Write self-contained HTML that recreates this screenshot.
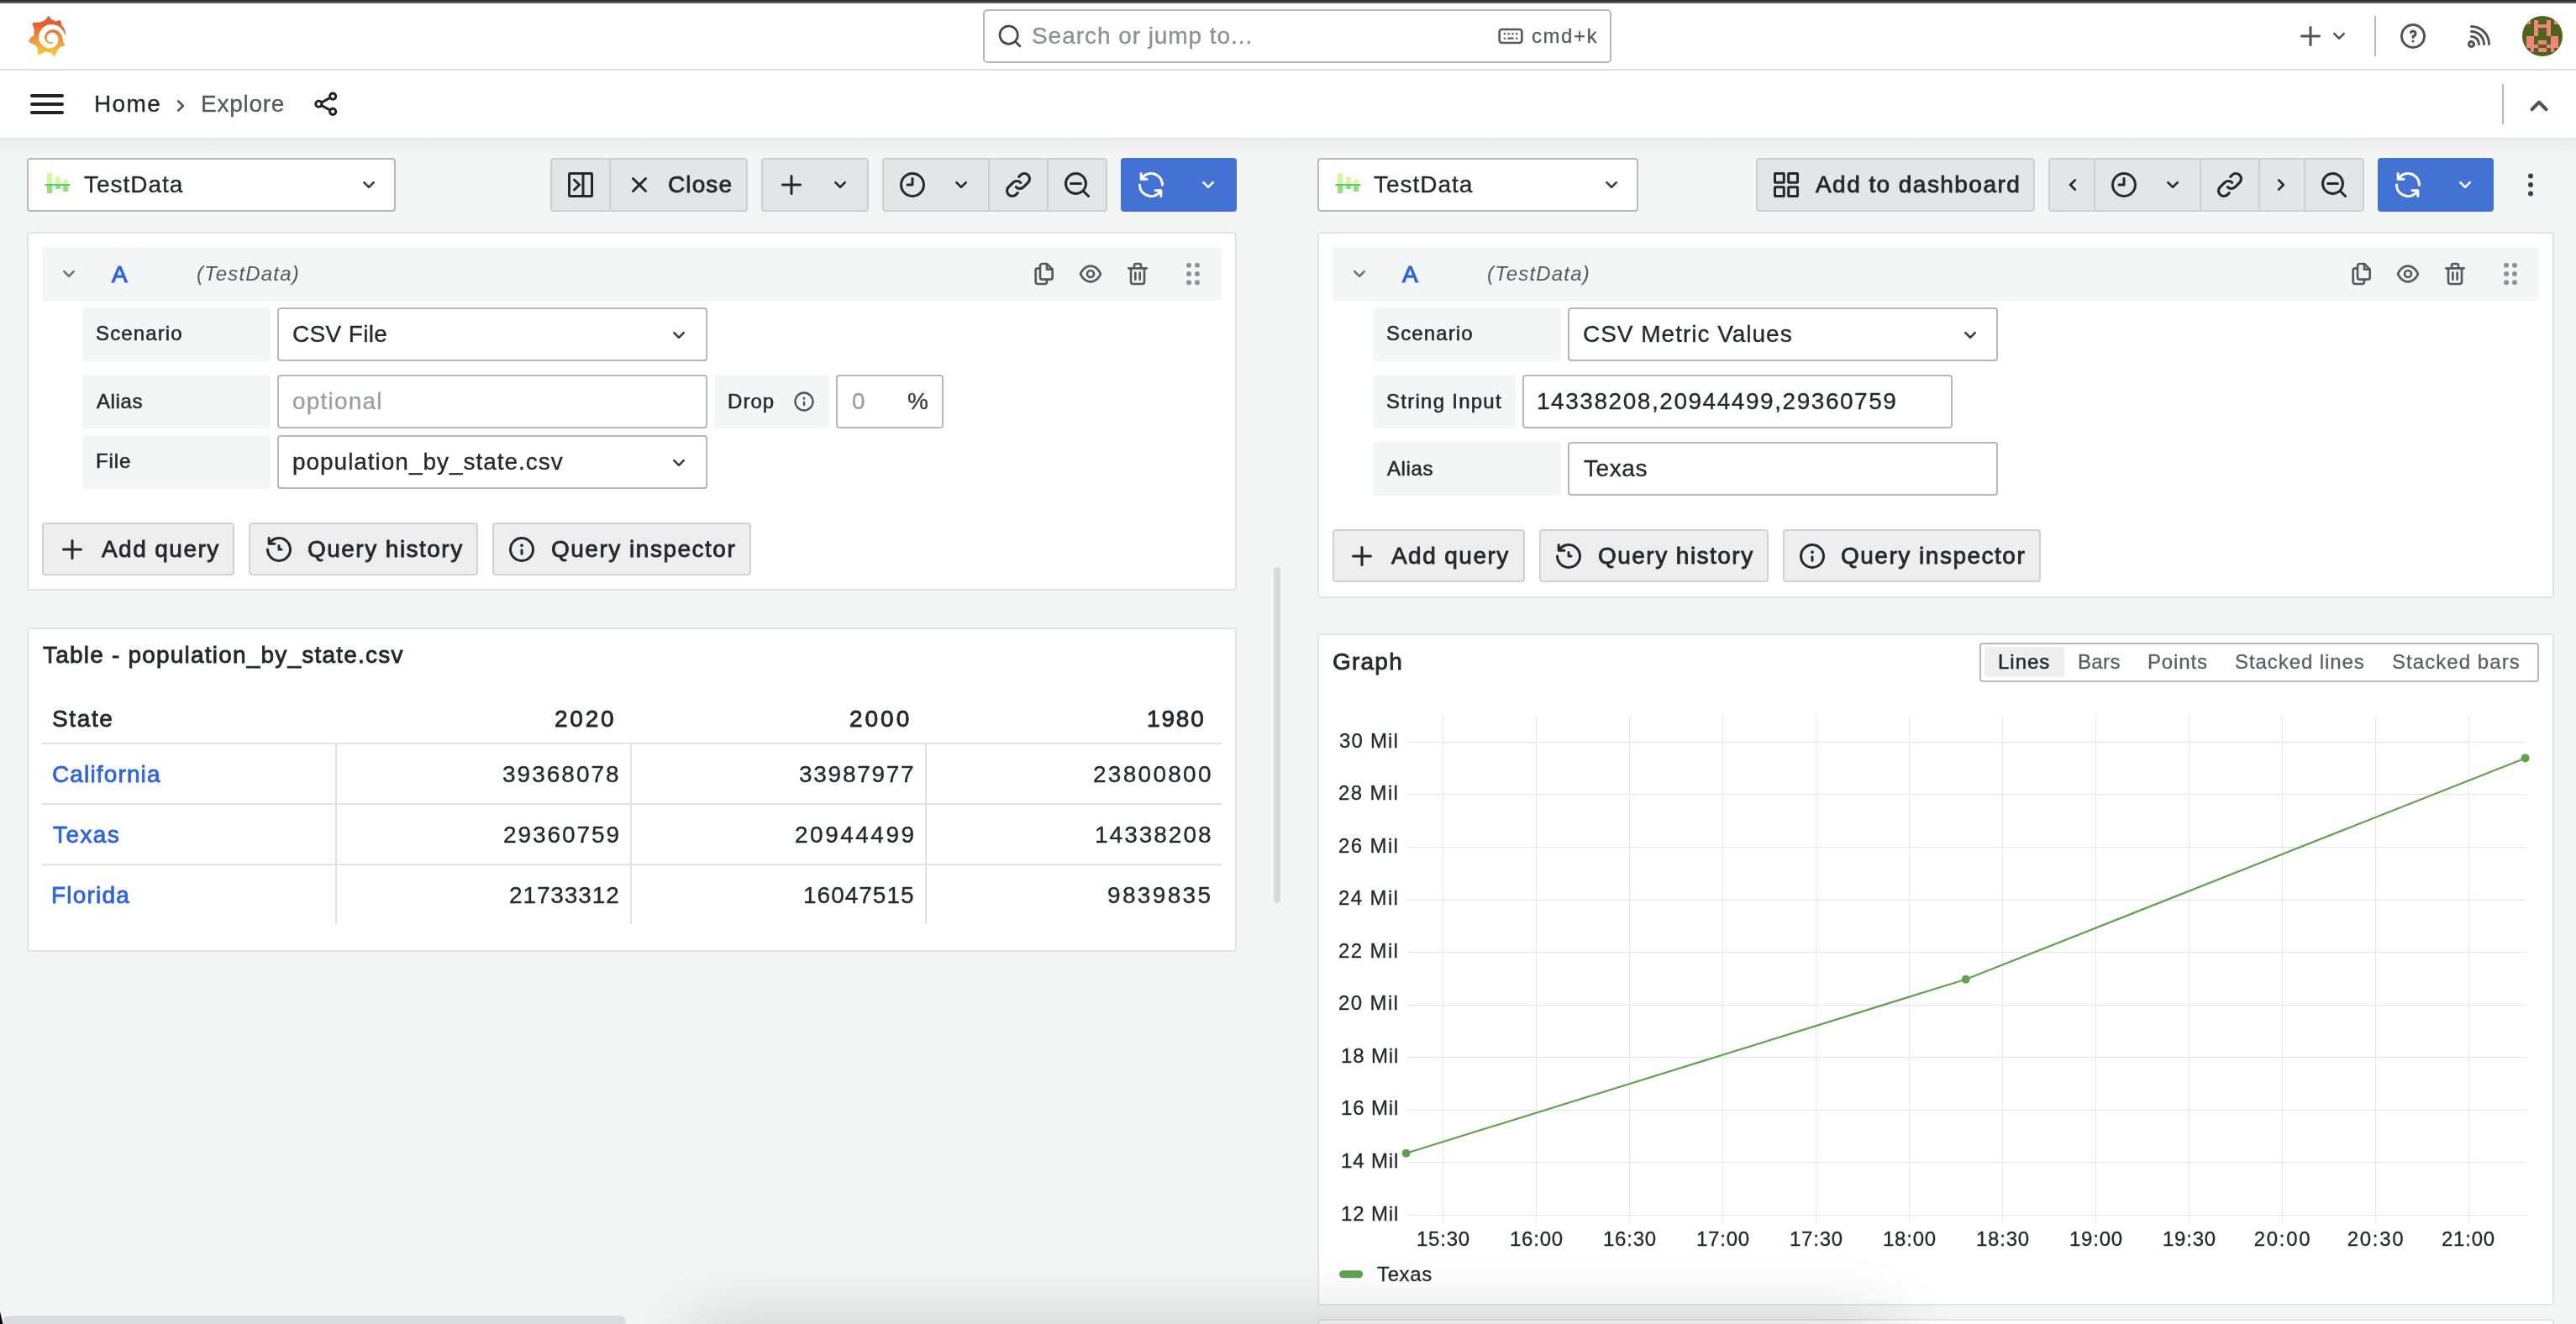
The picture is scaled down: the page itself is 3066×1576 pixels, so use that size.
<!DOCTYPE html>
<html lang="en"><head><meta charset="utf-8"><title>Explore - Grafana</title>
<style>
html,body{margin:0;padding:0}
body{width:3066px;height:1576px;overflow:hidden;position:relative;background:#f4f5f5;font-family:"Liberation Sans", sans-serif;}
.b{position:absolute;box-sizing:border-box}
.t{position:absolute;white-space:nowrap;line-height:1;font-family:"Liberation Sans", sans-serif;will-change:transform}
.i{position:absolute;overflow:visible;fill:currentColor}
.i .s{fill:none;stroke:currentColor;stroke-width:var(--sw);stroke-linecap:round;stroke-linejoin:round}
</style></head><body>
<div class="b" style="left:0px;top:0px;width:3066px;height:164px;background:#ffffff;"></div>
<div class="b" style="left:0;top:164px;width:3066px;height:22px;background:linear-gradient(#eaebeb,#f4f5f5)"></div>
<div class="b" style="left:0;top:164px;width:3066px;height:1px;background:#e2e3e3"></div>
<div class="b" style="left:0px;top:82px;width:3066px;height:2px;background:#e3e4e6;"></div>
<div class="b" style="left:0px;top:0px;width:3066px;height:2px;background:#333438;"></div>
<div class="b" style="left:0px;top:2px;width:3066px;height:1px;background:#5f6065;"></div>
<div class="b" style="left:0px;top:3px;width:3066px;height:1px;background:#525358;"></div>
<svg class="i" style="left:24px;top:10px" width="66" height="66" viewBox="0 0 1324 1324"><defs><linearGradient id="lg" gradientUnits="userSpaceOnUse" x1="0" y1="1140" x2="0" y2="180"><stop offset="0" stop-color="#f7cf3c"/><stop offset=".5" stop-color="#ea8a3b"/><stop offset=".8" stop-color="#e05d37"/><stop offset="1" stop-color="#e05a37"/></linearGradient></defs><path fill="url(#lg)" d="M680,180C668,180 653,210 640,225C627,240 613,258 600,270C587,282 577,292 560,300C543,308 520,314 500,320C480,326 468,332 440,335C412,338 353,333 330,335C307,337 307,336 302,345C297,354 295,371 298,390C301,409 314,438 320,460C326,482 333,497 335,520C337,543 332,578 330,600C328,622 332,635 320,650C308,665 279,670 260,690C241,710 210,750 205,770C200,790 214,797 230,810C246,823 277,837 300,850C323,863 353,877 370,890C387,903 391,915 400,930C409,945 422,963 425,980C428,997 420,1010 420,1030C420,1050 415,1089 428,1100C441,1111 478,1102 500,1095C522,1088 543,1069 560,1060C577,1051 580,1042 600,1040C620,1038 657,1045 680,1050C703,1055 723,1058 740,1070C757,1082 767,1108 780,1120C793,1132 808,1144 820,1142C832,1140 842,1125 850,1110C858,1095 863,1067 870,1050C877,1033 880,1025 890,1010C900,995 917,975 930,960C943,945 953,930 970,920C987,910 1014,907 1030,900C1046,893 1063,890 1067,880C1071,870 1061,853 1055,840C1049,827 1036,812 1030,800C1024,788 1022,783 1020,770C1018,757 1020,742 1015,720C1010,698 1002,665 990,640C978,615 962,590 940,570C918,550 888,530 860,520C832,510 800,506 770,508C740,510 705,521 680,535C655,549 635,569 620,590C605,611 595,635 590,660C585,685 583,717 590,740C597,763 612,783 630,800C648,817 677,834 700,840C723,846 753,840 770,835C787,830 804,817 802,812C800,807 777,807 760,805C743,803 718,808 700,800C682,792 665,777 655,760C645,743 639,722 640,700C641,678 647,649 660,630C673,611 697,593 720,585C743,577 775,573 800,580C825,587 852,605 870,625C888,645 904,672 910,700C916,728 913,760 905,790C897,820 879,856 860,880C841,904 817,922 790,935C763,948 732,956 700,955C668,954 630,944 600,930C570,916 542,893 520,870C498,847 478,820 465,790C452,760 446,723 445,690C444,657 449,622 460,590C471,558 488,528 510,500C532,472 560,444 590,425C620,406 657,394 690,388C723,382 758,384 790,388C822,392 852,398 880,410C908,422 937,440 960,460C983,480 1003,505 1020,530C1037,555 1050,591 1060,610C1070,629 1074,644 1078,642C1082,640 1087,620 1086,600C1085,580 1078,545 1070,520C1062,495 1049,472 1035,450C1021,428 994,410 985,390C976,370 983,346 980,330C977,314 972,302 965,295C958,288 952,285 940,285C928,285 905,291 890,295C875,299 865,312 850,310C835,308 817,292 800,285C783,278 764,276 750,265C736,254 727,236 715,222C703,208 692,180 680,180Z"/></svg>
<div class="b" style="left:1170px;top:11px;width:748px;height:64px;background:#ffffff;border:2px solid #b6b8bb;border-radius:5px;"></div>
<svg class="i" style="left:1186.00px;top:26.80px;color:#3f444a;--sw:2" width="32" height="32" viewBox="0 0 24 24"><path d="M21.71,20.29,18,16.61A9,9,0,1,0,16.61,18l3.68,3.68a1,1,0,0,0,1.42,0A1,1,0,0,0,21.71,20.29ZM11,18a7,7,0,1,1,7-7A7,7,0,0,1,11,18Z"/></svg>
<span id="t1" class="t" style="top:29.40px;font-size:28px;color:#8e9195;left:1228.47px;letter-spacing:0.947px;-webkit-text-stroke:0.35px #8e9195;">Search or jump to...</span>
<svg class="i" style="left:1782.00px;top:27.00px;color:#555960;--sw:2.0" width="32" height="32" viewBox="0 0 24 24"><g class="s"><rect x="2" y="6" width="20" height="12" rx="2.200"/></g><g><circle cx="6.600" cy="10" r=".950"/><circle cx="10.200" cy="10" r=".950"/><circle cx="13.800" cy="10" r=".950"/><circle cx="17.400" cy="10" r=".950"/><circle cx="6.600" cy="14" r=".950"/><circle cx="17.400" cy="14" r=".950"/><rect x="9.200" y="13.100" width="5.600" height="1.800" rx=".900"/></g></svg>
<span id="t2" class="t" style="top:30.58px;font-size:24px;color:#555960;left:1822.85px;letter-spacing:1.561px;-webkit-text-stroke:0.3px #555960;">cmd+k</span>
<svg class="i" style="left:2732.00px;top:25.00px;color:#50545a;--sw:2" width="36" height="36" viewBox="0 0 24 24"><path d="M19,11H13V5a1,1,0,0,0-2,0v6H5a1,1,0,0,0,0,2h6v6a1,1,0,0,0,2,0V13h6a1,1,0,0,0,0-2Z"/></svg>
<svg class="i" style="left:2768.00px;top:27.00px;color:#50545a;--sw:2" width="32" height="32" viewBox="0 0 24 24"><path d="M17,9.17a1,1,0,0,0-1.41,0L12,12.71,8.46,9.17a1,1,0,0,0-1.41,0,1,1,0,0,0,0,1.42l4.24,4.24a1,1,0,0,0,1.42,0L17,10.59A1,1,0,0,0,17,9.17Z"/></svg>
<div class="b" style="left:2826px;top:19px;width:2px;height:48px;background:#bbbdc0;"></div>
<svg class="i" style="left:2854.00px;top:25.00px;color:#50545a;--sw:2" width="36" height="36" viewBox="0 0 24 24"><path d="M11.29,15.29a1.58,1.58,0,0,0-.12.15.76.76,0,0,0-.09.18.64.64,0,0,0-.06.18,1.36,1.36,0,0,0,0,.2.84.84,0,0,0,.08.38.9.9,0,0,0,.54.54.94.94,0,0,0,.76,0,.9.9,0,0,0,.54-.54A1,1,0,0,0,13,16a1,1,0,0,0-.29-.71A1,1,0,0,0,11.29,15.29ZM12,2A10,10,0,1,0,22,12,10,10,0,0,0,12,2Zm0,18a8,8,0,1,1,8-8A8,8,0,0,1,12,20ZM12,7A3,3,0,0,0,9.4,8.5a1,1,0,1,0,1.73,1A1,1,0,0,1,12,9a1,1,0,0,1,0,2,1,1,0,0,0-1,1v1a1,1,0,0,0,2,0v-.18A3,3,0,0,0,12,7Z"/></svg>
<svg class="i" style="left:2933.60px;top:24.40px;color:#50545a;--sw:2" width="36" height="36" viewBox="0 0 24 24"><path d="M2.88,16.88a3,3,0,0,0,0,4.24,3,3,0,0,0,4.24,0,3,3,0,0,0-4.24-4.24Zm2.83,2.830a1,1,0,0,1-1.42-1.42,1,1,0,0,1,1.42,0A1,1,0,0,1,5.71,19.71ZM5,12a1,1,0,0,0,0,2,5,5,0,0,1,5,5,1,1,0,0,0,2,0,7,7,0,0,0-7-7ZM5,8a1,1,0,0,0,0,2,9,9,0,0,1,9,9,1,1,0,0,0,2,0A11,11,0,0,0,5,8ZM5,4A1,1,0,0,0,5,6,13,13,0,0,1,18,19a1,1,0,0,0,2,0A15,15,0,0,0,5,4Z"/></svg>
<svg class="i" style="left:3002px;top:18.800px" width="48" height="48" viewBox="0 0 10 10"><defs><clipPath id="ac"><circle cx="5" cy="5" r="5"/></clipPath></defs><g clip-path="url(#ac)" shape-rendering="crispEdges"><rect width="10" height="10" fill="#4e641d"/><rect x="0.99" y="0.99" width="1.020" height="1.020" fill="#ee867b"/><rect x="2.99" y="0.99" width="1.020" height="1.020" fill="#ee867b"/><rect x="5.99" y="0.99" width="1.020" height="1.020" fill="#ee867b"/><rect x="7.99" y="0.99" width="1.020" height="1.020" fill="#ee867b"/><rect x="2.99" y="1.99" width="1.020" height="1.020" fill="#ee867b"/><rect x="3.99" y="1.99" width="1.020" height="1.020" fill="#ee867b"/><rect x="4.99" y="1.99" width="1.020" height="1.020" fill="#ee867b"/><rect x="5.99" y="1.99" width="1.020" height="1.020" fill="#ee867b"/><rect x="2.99" y="2.99" width="1.020" height="1.020" fill="#ee867b"/><rect x="5.99" y="2.99" width="1.020" height="1.020" fill="#ee867b"/><rect x="2.99" y="3.99" width="1.020" height="1.020" fill="#ee867b"/><rect x="5.99" y="3.99" width="1.020" height="1.020" fill="#ee867b"/><rect x="0.99" y="4.99" width="1.020" height="1.020" fill="#ee867b"/><rect x="1.99" y="4.99" width="1.020" height="1.020" fill="#ee867b"/><rect x="6.99" y="4.99" width="1.020" height="1.020" fill="#ee867b"/><rect x="7.99" y="4.99" width="1.020" height="1.020" fill="#ee867b"/><rect x="0.99" y="5.99" width="1.020" height="1.020" fill="#ee867b"/><rect x="1.99" y="5.99" width="1.020" height="1.020" fill="#ee867b"/><rect x="3.99" y="5.99" width="1.020" height="1.020" fill="#ee867b"/><rect x="4.99" y="5.99" width="1.020" height="1.020" fill="#ee867b"/><rect x="6.99" y="5.99" width="1.020" height="1.020" fill="#ee867b"/><rect x="7.99" y="5.99" width="1.020" height="1.020" fill="#ee867b"/><rect x="0.99" y="6.99" width="1.020" height="1.020" fill="#ee867b"/><rect x="1.99" y="6.99" width="1.020" height="1.020" fill="#ee867b"/><rect x="2.99" y="6.99" width="1.020" height="1.020" fill="#ee867b"/><rect x="5.99" y="6.99" width="1.020" height="1.020" fill="#ee867b"/><rect x="6.99" y="6.99" width="1.020" height="1.020" fill="#ee867b"/><rect x="7.99" y="6.99" width="1.020" height="1.020" fill="#ee867b"/><rect x="1.99" y="7.99" width="1.020" height="1.020" fill="#ee867b"/><rect x="3.99" y="7.99" width="1.020" height="1.020" fill="#ee867b"/><rect x="4.99" y="7.99" width="1.020" height="1.020" fill="#ee867b"/><rect x="6.99" y="7.99" width="1.020" height="1.020" fill="#ee867b"/></g></svg>
<svg class="i" style="left:32.00px;top:100.00px;color:#1f2328;--sw:2" width="48" height="48" viewBox="0 0 24 24"><path d="M3,8H21a1,1,0,0,0,0-2H3A1,1,0,0,0,3,8Zm18,8H3a1,1,0,0,0,0,2H21a1,1,0,0,0,0-2Zm0-5H3a1,1,0,0,0,0,2H21a1,1,0,0,0,0-2Z"/></svg>
<span id="t3" class="t" style="top:109.80px;font-size:28px;color:#24292e;left:111.77px;letter-spacing:1.344px;-webkit-text-stroke:0.35px #24292e;">Home</span>
<svg class="i" style="left:199.00px;top:110.40px;color:#50545a;--sw:2" width="32" height="32" viewBox="0 0 24 24"><path d="M14.83,11.29,10.59,7.05a1,1,0,0,0-1.42,0,1,1,0,0,0,0,1.41L12.71,12,9.17,15.54a1,1,0,0,0,0,1.41,1,1,0,0,0,.71.29,1,1,0,0,0,.71-.29l4.24-4.24A1,1,0,0,0,14.83,11.29Z"/></svg>
<span id="t4" class="t" style="top:109.80px;font-size:28px;color:#565a60;left:239.38px;letter-spacing:0.747px;-webkit-text-stroke:0.35px #565a60;">Explore</span>
<svg class="i" style="left:371.25px;top:107.25px;color:#1f2328;--sw:2.1" width="33.5" height="33.5" viewBox="0 0 24 24"><g class="s"><circle cx="18" cy="5.500" r="2.600"/><circle cx="6" cy="12" r="2.600"/><circle cx="18" cy="18.500" r="2.600"/><path d="M8.300 10.700l7.400-4M8.300 13.300l7.400 4"/></g></svg>
<div class="b" style="left:2978px;top:100px;width:2px;height:48px;background:#bbbdc0;"></div>
<svg class="i" style="left:2998.00px;top:102.00px;color:#50545a;--sw:2" width="48" height="48" viewBox="0 0 24 24"><path d="M17,13.41,12.71,9.17a1,1,0,0,0-1.42,0L7.05,13.41a1,1,0,0,0,0,1.42,1,1,0,0,0,1.41,0L12,11.29l3.54,3.54a1,1,0,0,0,.7.29,1,1,0,0,0,.71-.29A1,1,0,0,0,17,13.41Z"/></svg>
<div class="b" style="left:32.4px;top:188px;width:438.2px;height:63.5px;background:#ffffff;border:2px solid #b6b8bb;border-radius:4px;"></div>
<svg class="i" style="left:52.9px;top:204px" width="32" height="28" viewBox="0 0 32 28"><rect x="3" y="2" width="6.300" height="13.500" fill="#d6f5a6"/><rect x="3" y="15.500" width="6.300" height="10.500" fill="#8ce27c"/><rect x="12.800" y="6.500" width="6" height="9" fill="#d6f5a6"/><rect x="12.800" y="15.500" width="6" height="5.500" fill="#8ce27c"/><rect x="22" y="9.700" width="6.300" height="5.800" fill="#d6f5a6"/><rect x="22" y="15.500" width="6.300" height="8.500" fill="#8ce27c"/><rect x="0.500" y="15" width="30" height="2" fill="#63c76d"/></svg>
<span id="t5" class="t" style="top:206.10px;font-size:28px;color:#24292e;left:99.58px;letter-spacing:0.961px;-webkit-text-stroke:0.35px #24292e;">TestData</span>
<svg class="i" style="left:422.60px;top:204.30px;color:#3a3f45;--sw:2" width="32" height="32" viewBox="0 0 24 24"><path d="M17,9.17a1,1,0,0,0-1.41,0L12,12.71,8.46,9.17a1,1,0,0,0-1.41,0,1,1,0,0,0,0,1.42l4.24,4.24a1,1,0,0,0,1.42,0L17,10.59A1,1,0,0,0,17,9.17Z"/></svg>
<div class="b" style="left:655px;top:188px;width:235px;height:63.5px;background:#e4e5e7;border:2px solid #cdcfd2;border-radius:4px;"></div>
<div class="b" style="left:725px;top:190px;width:2px;height:59.5px;background:#cdcfd2;"></div>
<svg class="i" style="left:673.00px;top:202.00px;color:#24292e;--sw:2.0" width="36" height="36" viewBox="0 0 24 24"><g class="s" style="stroke-linejoin:miter"><rect x="3" y="3" width="18" height="18" rx=".500"/><path d="M14 3v18"/><path d="M7 8l4 4-4 4"/></g></svg>
<svg class="i" style="left:743.00px;top:202.00px;color:#24292e;--sw:2" width="36" height="36" viewBox="0 0 24 24"><path d="M13.41,12l4.3-4.29a1,1,0,1,0-1.42-1.42L12,10.59,7.71,6.29A1,1,0,0,0,6.29,7.71L10.59,12l-4.3,4.29a1,1,0,0,0,0,1.42,1,1,0,0,0,1.42,0L12,13.41l4.29,4.3a1,1,0,0,0,1.42,0,1,1,0,0,0,0-1.42Z"/></svg>
<span id="t6" class="t" style="top:206.00px;font-size:28px;color:#24292e;left:795.02px;letter-spacing:1.112px;-webkit-text-stroke:0.84px #24292e;">Close</span>
<div class="b" style="left:906px;top:188px;width:128px;height:63.5px;background:#e4e5e7;border:2px solid #cdcfd2;border-radius:4px;"></div>
<svg class="i" style="left:924.00px;top:202.00px;color:#24292e;--sw:2" width="36" height="36" viewBox="0 0 24 24"><path d="M19,11H13V5a1,1,0,0,0-2,0v6H5a1,1,0,0,0,0,2h6v6a1,1,0,0,0,2,0V13h6a1,1,0,0,0,0-2Z"/></svg>
<svg class="i" style="left:984.00px;top:204.00px;color:#24292e;--sw:2" width="32" height="32" viewBox="0 0 24 24"><path d="M17,9.17a1,1,0,0,0-1.41,0L12,12.71,8.46,9.17a1,1,0,0,0-1.41,0,1,1,0,0,0,0,1.42l4.24,4.24a1,1,0,0,0,1.42,0L17,10.59A1,1,0,0,0,17,9.17Z"/></svg>
<div class="b" style="left:1050px;top:188px;width:268px;height:63.5px;background:#e4e5e7;border:2px solid #cdcfd2;border-radius:4px;"></div>
<div class="b" style="left:1176.3px;top:190px;width:2px;height:59.5px;background:#cdcfd2;"></div>
<div class="b" style="left:1246px;top:190px;width:2px;height:59.5px;background:#cdcfd2;"></div>
<svg class="i" style="left:1067.80px;top:202.00px;color:#24292e;--sw:2" width="36" height="36" viewBox="0 0 24 24"><path d="M12,2A10,10,0,1,0,22,12,10.01114,10.01114,0,0,0,12,2Zm0,18a8,8,0,1,1,8-8A8.00917,8.00917,0,0,1,12,20ZM12,6a.99974.99974,0,0,0-1,1v4H8a1,1,0,0,0,0,2h4a.99974.99974,0,0,0,1-1V7A.99974.99974,0,0,0,12,6Z"/></svg>
<svg class="i" style="left:1127.80px;top:204.00px;color:#24292e;--sw:2" width="32" height="32" viewBox="0 0 24 24"><path d="M17,9.17a1,1,0,0,0-1.41,0L12,12.71,8.46,9.17a1,1,0,0,0-1.41,0,1,1,0,0,0,0,1.42l4.24,4.24a1,1,0,0,0,1.42,0L17,10.59A1,1,0,0,0,17,9.17Z"/></svg>
<svg class="i" style="left:1194.00px;top:202.00px;color:#24292e;--sw:2.1" width="36" height="36" viewBox="0 0 24 24"><g class="s"><path d="M10.2 13.8a4.2 4.2 0 0 0 5.94 0l3.6-3.6a4.2 4.2 0 0 0-5.94-5.94l-1.3 1.3"/><path d="M13.8 10.2a4.2 4.2 0 0 0-5.94 0l-3.6 3.6a4.2 4.2 0 0 0 5.94 5.94l1.3-1.3"/></g></svg>
<svg class="i" style="left:1263.90px;top:202.00px;color:#24292e;--sw:2" width="36" height="36" viewBox="0 0 24 24"><path d="M21.71,20.29,18,16.61A9,9,0,1,0,16.61,18l3.68,3.68a1,1,0,0,0,1.42,0A1,1,0,0,0,21.71,20.29ZM11,18a7,7,0,1,1,7-7A7,7,0,0,1,11,18Zm4-8H7a1,1,0,0,0,0,2h8a1,1,0,0,0,0-2Z"/></svg>
<div class="b" style="left:1334px;top:188px;width:138px;height:64px;background:#4472d4;border-radius:4px;"></div>
<svg class="i" style="left:1351.70px;top:202.00px;color:#ffffff;--sw:2.1" width="36" height="36" viewBox="0 0 24 24"><path d="M19.91,15.51H15.38a1,1,0,0,0,0,2h2.4A8,8,0,0,1,4,12a1,1,0,0,0-2,0,10,10,0,0,0,16.88,7.23V21a1,1,0,0,0,2,0V16.5A1,1,0,0,0,19.91,15.51ZM12,2A10,10,0,0,0,5.12,4.77V3a1,1,0,0,0-2,0V7.5a1,1,0,0,0,1,1h4.5a1,1,0,0,0,0-2H6.22A8,8,0,0,1,20,12a1,1,0,0,0,2,0A10,10,0,0,0,12,2Z"/></svg>
<svg class="i" style="left:1422.00px;top:204.00px;color:#ffffff;--sw:2" width="32" height="32" viewBox="0 0 24 24"><path d="M17,9.17a1,1,0,0,0-1.41,0L12,12.71,8.46,9.17a1,1,0,0,0-1.41,0,1,1,0,0,0,0,1.42l4.24,4.24a1,1,0,0,0,1.42,0L17,10.59A1,1,0,0,0,17,9.17Z"/></svg>
<div class="b" style="left:1568px;top:188px;width:382px;height:63.5px;background:#ffffff;border:2px solid #b6b8bb;border-radius:4px;"></div>
<svg class="i" style="left:1588.5px;top:204px" width="32" height="28" viewBox="0 0 32 28"><rect x="3" y="2" width="6.300" height="13.500" fill="#d6f5a6"/><rect x="3" y="15.500" width="6.300" height="10.500" fill="#8ce27c"/><rect x="12.800" y="6.500" width="6" height="9" fill="#d6f5a6"/><rect x="12.800" y="15.500" width="6" height="5.500" fill="#8ce27c"/><rect x="22" y="9.700" width="6.300" height="5.800" fill="#d6f5a6"/><rect x="22" y="15.500" width="6.300" height="8.500" fill="#8ce27c"/><rect x="0.500" y="15" width="30" height="2" fill="#63c76d"/></svg>
<span id="t7" class="t" style="top:206.10px;font-size:28px;color:#24292e;left:1635.17px;letter-spacing:0.961px;-webkit-text-stroke:0.35px #24292e;">TestData</span>
<svg class="i" style="left:1902.00px;top:204.30px;color:#3a3f45;--sw:2" width="32" height="32" viewBox="0 0 24 24"><path d="M17,9.17a1,1,0,0,0-1.41,0L12,12.71,8.46,9.17a1,1,0,0,0-1.41,0,1,1,0,0,0,0,1.42l4.24,4.24a1,1,0,0,0,1.42,0L17,10.59A1,1,0,0,0,17,9.17Z"/></svg>
<div class="b" style="left:2089.5px;top:188px;width:332px;height:63.5px;background:#e4e5e7;border:2px solid #cdcfd2;border-radius:4px;"></div>
<svg class="i" style="left:2108.00px;top:202.00px;color:#24292e;--sw:2.0" width="36" height="36" viewBox="0 0 24 24"><g class="s" style="stroke-linejoin:miter"><rect x="3" y="3" width="7.200" height="7.200" rx=".400"/><rect x="13.800" y="3" width="7.200" height="7.200" rx=".400"/><rect x="3" y="13.800" width="7.200" height="7.200" rx=".400"/><rect x="13.800" y="13.800" width="7.200" height="7.200" rx=".400"/></g></svg>
<span id="t8" class="t" style="top:206.00px;font-size:28px;color:#24292e;left:2160.92px;letter-spacing:1.445px;-webkit-text-stroke:0.84px #24292e;">Add to dashboard</span>
<div class="b" style="left:2438px;top:188px;width:375.6px;height:63.5px;background:#e4e5e7;border:2px solid #cdcfd2;border-radius:4px;"></div>
<div class="b" style="left:2492.2px;top:190px;width:2px;height:59.5px;background:#cdcfd2;"></div>
<div class="b" style="left:2618.2px;top:190px;width:2px;height:59.5px;background:#cdcfd2;"></div>
<div class="b" style="left:2687.8px;top:190px;width:2px;height:59.5px;background:#cdcfd2;"></div>
<div class="b" style="left:2742.2px;top:190px;width:2px;height:59.5px;background:#cdcfd2;"></div>
<svg class="i" style="left:2450.60px;top:204.00px;color:#24292e;--sw:2" width="32" height="32" viewBox="0 0 24 24"><path d="M11.29,12l3.54-3.54a1,1,0,0,0,0-1.41,1,1,0,0,0-1.42,0L9.17,11.29a1,1,0,0,0,0,1.42L13.41,17a1,1,0,0,0,.71.29,1,1,0,0,0,.71-.29,1,1,0,0,0,0-1.41Z"/></svg>
<svg class="i" style="left:2509.80px;top:202.00px;color:#24292e;--sw:2" width="36" height="36" viewBox="0 0 24 24"><path d="M12,2A10,10,0,1,0,22,12,10.01114,10.01114,0,0,0,12,2Zm0,18a8,8,0,1,1,8-8A8.00917,8.00917,0,0,1,12,20ZM12,6a.99974.99974,0,0,0-1,1v4H8a1,1,0,0,0,0,2h4a.99974.99974,0,0,0,1-1V7A.99974.99974,0,0,0,12,6Z"/></svg>
<svg class="i" style="left:2569.80px;top:204.00px;color:#24292e;--sw:2" width="32" height="32" viewBox="0 0 24 24"><path d="M17,9.17a1,1,0,0,0-1.41,0L12,12.71,8.46,9.17a1,1,0,0,0-1.41,0,1,1,0,0,0,0,1.42l4.24,4.24a1,1,0,0,0,1.42,0L17,10.59A1,1,0,0,0,17,9.17Z"/></svg>
<svg class="i" style="left:2636.20px;top:202.00px;color:#24292e;--sw:2.1" width="36" height="36" viewBox="0 0 24 24"><g class="s"><path d="M10.2 13.8a4.2 4.2 0 0 0 5.94 0l3.6-3.6a4.2 4.2 0 0 0-5.94-5.94l-1.3 1.3"/><path d="M13.8 10.2a4.2 4.2 0 0 0-5.94 0l-3.6 3.6a4.2 4.2 0 0 0 5.94 5.94l1.3-1.3"/></g></svg>
<svg class="i" style="left:2699.40px;top:204.00px;color:#24292e;--sw:2" width="32" height="32" viewBox="0 0 24 24"><path d="M14.83,11.29,10.59,7.05a1,1,0,0,0-1.42,0,1,1,0,0,0,0,1.41L12.71,12,9.17,15.54a1,1,0,0,0,0,1.41,1,1,0,0,0,.71.29,1,1,0,0,0,.71-.29l4.24-4.24A1,1,0,0,0,14.83,11.29Z"/></svg>
<svg class="i" style="left:2759.80px;top:202.00px;color:#24292e;--sw:2" width="36" height="36" viewBox="0 0 24 24"><path d="M21.71,20.29,18,16.61A9,9,0,1,0,16.61,18l3.68,3.68a1,1,0,0,0,1.42,0A1,1,0,0,0,21.71,20.29ZM11,18a7,7,0,1,1,7-7A7,7,0,0,1,11,18Zm4-8H7a1,1,0,0,0,0,2h8a1,1,0,0,0,0-2Z"/></svg>
<div class="b" style="left:2830px;top:188px;width:138px;height:64px;background:#4472d4;border-radius:4px;"></div>
<svg class="i" style="left:2847.70px;top:202.00px;color:#ffffff;--sw:2.1" width="36" height="36" viewBox="0 0 24 24"><path d="M19.91,15.51H15.38a1,1,0,0,0,0,2h2.4A8,8,0,0,1,4,12a1,1,0,0,0-2,0,10,10,0,0,0,16.88,7.23V21a1,1,0,0,0,2,0V16.5A1,1,0,0,0,19.91,15.51ZM12,2A10,10,0,0,0,5.12,4.77V3a1,1,0,0,0-2,0V7.5a1,1,0,0,0,1,1h4.5a1,1,0,0,0,0-2H6.22A8,8,0,0,1,20,12a1,1,0,0,0,2,0A10,10,0,0,0,12,2Z"/></svg>
<svg class="i" style="left:2917.60px;top:204.00px;color:#ffffff;--sw:2" width="32" height="32" viewBox="0 0 24 24"><path d="M17,9.17a1,1,0,0,0-1.41,0L12,12.71,8.46,9.17a1,1,0,0,0-1.41,0,1,1,0,0,0,0,1.42l4.24,4.24a1,1,0,0,0,1.42,0L17,10.59A1,1,0,0,0,17,9.17Z"/></svg>
<svg class="i" style="left:2994.00px;top:202.00px;color:#3a3f45;--sw:2" width="36" height="36" viewBox="0 0 24 24"><path d="M12,7a2,2,0,1,0-2-2A2,2,0,0,0,12,7Zm0,10a2,2,0,1,0,2,2A2,2,0,0,0,12,17Zm0-7a2,2,0,1,0,2,2A2,2,0,0,0,12,10Z"/></svg>
<div class="b" style="left:32.4px;top:276.4px;width:1439.4px;height:427px;background:#ffffff;border:2px solid #e3e4e6;border-radius:4px;"></div>
<div class="b" style="left:50px;top:294px;width:1404px;height:64px;background:#f4f5f5;border-radius:4px;"></div>
<svg class="i" style="left:66.00px;top:310.00px;color:#6e7277;--sw:2" width="32" height="32" viewBox="0 0 24 24"><path d="M17,9.17a1,1,0,0,0-1.41,0L12,12.71,8.46,9.17a1,1,0,0,0-1.41,0,1,1,0,0,0,0,1.42l4.24,4.24a1,1,0,0,0,1.42,0L17,10.59A1,1,0,0,0,17,9.17Z"/></svg>
<span id="t9" class="t" style="top:312.80px;font-size:28px;color:#2f65db;left:133.00px;-webkit-text-stroke:1.2px #2f65db;">A</span>
<span id="t10" class="t" style="top:314.18px;font-size:24px;color:#54585e;left:234.30px;letter-spacing:1.171px;font-style:italic;">(TestData)</span>
<svg class="i" style="left:1226.00px;top:310.00px;color:#565a60;--sw:2.0" width="32" height="32" viewBox="0 0 24 24"><g class="s"><path d="M9 6.5V4.8A1.8 1.8 0 0 1 10.800 3H15l5 5v7.2A1.8 1.8 0 0 1 18.200 17H10.800A1.8 1.8 0 0 1 9 15.200Z"/><path d="M15 3.200V8h4.800"/><path d="M9 7H6.800A1.800 1.800 0 0 0 5 8.800V19.200A1.800 1.800 0 0 0 6.800 21H13.200A1.800 1.800 0 0 0 15 19.200V17"/></g></svg>
<svg class="i" style="left:1282.00px;top:310.00px;color:#565a60;--sw:2.0" width="32" height="32" viewBox="0 0 24 24"><path d="M21.92,11.6C19.9,6.91,16.1,4,12,4S4.1,6.91,2.08,11.6a1,1,0,0,0,0,.8C4.1,17.09,7.9,20,12,20s7.9-2.91,9.92-7.6A1,1,0,0,0,21.92,11.6ZM12,18c-3.17,0-6.17-2.29-7.9-6C5.83,8.29,8.83,6,12,6s6.17,2.29,7.9,6C18.17,15.71,15.17,18,12,18ZM12,8a4,4,0,1,0,4,4A4,4,0,0,0,12,8Zm0,6a2,2,0,1,1,2-2A2,2,0,0,1,12,14Z"/></svg>
<svg class="i" style="left:1338.00px;top:310.00px;color:#565a60;--sw:2.0" width="32" height="32" viewBox="0 0 24 24"><g class="s"><path d="M4 7h16"/><path d="M9 7V4.500A1.500 1.500 0 0 1 10.500 3h3A1.500 1.500 0 0 1 15 4.500V7"/><path d="M6 7v12.200A1.800 1.800 0 0 0 7.800 21h8.400A1.800 1.800 0 0 0 18 19.200V7"/><path d="M10 11v6M14 11v6"/></g></svg>
<svg class="i" style="left:1404.00px;top:310.00px;color:#8f9296;--sw:2" width="32" height="32" viewBox="0 0 24 24"><g><circle cx="8.300" cy="4.300" r="2.250"/><circle cx="15.700" cy="4.300" r="2.250"/><circle cx="8.300" cy="12" r="2.250"/><circle cx="15.700" cy="12" r="2.250"/><circle cx="8.300" cy="19.700" r="2.250"/><circle cx="15.700" cy="19.700" r="2.250"/></g></svg>
<div class="b" style="left:98.2px;top:366px;width:223.4px;height:63.6px;background:#f4f5f5;border-radius:4px;"></div>
<span id="t11" class="t" style="top:385.48px;font-size:24px;color:#24292e;left:113.77px;letter-spacing:1.128px;-webkit-text-stroke:0.53px #24292e;">Scenario</span>
<div class="b" style="left:330.3px;top:366px;width:511.3px;height:63.6px;background:#ffffff;border:2px solid #b6b8bb;border-radius:4px;"></div>
<span id="t12" class="t" style="top:384.00px;font-size:28px;color:#24292e;left:347.78px;letter-spacing:0.351px;-webkit-text-stroke:0.35px #24292e;">CSV File</span>
<svg class="i" style="left:791.90px;top:382.50px;color:#3a3f45;--sw:2" width="32" height="32" viewBox="0 0 24 24"><path d="M17,9.17a1,1,0,0,0-1.41,0L12,12.71,8.46,9.17a1,1,0,0,0-1.41,0,1,1,0,0,0,0,1.42l4.24,4.24a1,1,0,0,0,1.42,0L17,10.59A1,1,0,0,0,17,9.17Z"/></svg>
<div class="b" style="left:98.2px;top:446.3px;width:223.4px;height:63.6px;background:#f4f5f5;border-radius:4px;"></div>
<span id="t13" class="t" style="top:465.78px;font-size:24px;color:#24292e;left:114.77px;letter-spacing:0.613px;-webkit-text-stroke:0.53px #24292e;">Alias</span>
<div class="b" style="left:330.3px;top:446.3px;width:511.3px;height:63.6px;background:#ffffff;border:2px solid #b6b8bb;border-radius:4px;"></div>
<span id="t14" class="t" style="top:464.30px;font-size:28px;color:#9b9ea2;left:347.78px;letter-spacing:1.198px;-webkit-text-stroke:0.35px #9b9ea2;">optional</span>
<div class="b" style="left:850.3px;top:446.3px;width:136.3px;height:63.6px;background:#f4f5f5;border-radius:4px;"></div>
<span id="t15" class="t" style="top:465.88px;font-size:24px;color:#24292e;left:865.87px;letter-spacing:1.066px;-webkit-text-stroke:0.53px #24292e;">Drop</span>
<svg class="i" style="left:942.80px;top:464.00px;color:#50545a;--sw:2" width="28" height="28" viewBox="0 0 24 24"><path d="M12,2A10,10,0,1,0,22,12,10.01114,10.01114,0,0,0,12,2Zm0,18a8,8,0,1,1,8-8A8.00917,8.00917,0,0,1,12,20Zm0-8.5a1,1,0,0,0-1,1v3a1,1,0,0,0,2,0v-3A1,1,0,0,0,12,11.5Zm0-4a1.25,1.25,0,1,0,1.25,1.25A1.25,1.25,0,0,0,12,7.5Z"/></svg>
<div class="b" style="left:995px;top:446.3px;width:128px;height:63.6px;background:#ffffff;border:2px solid #b6b8bb;border-radius:4px;"></div>
<span id="t16" class="t" style="top:464.10px;font-size:28px;color:#9b9ea2;left:1013.97px;-webkit-text-stroke:0.35px #9b9ea2;">0</span>
<span id="t17" class="t" style="top:464.10px;font-size:28px;color:#3a3f45;left:1079.88px;-webkit-text-stroke:0.35px #3a3f45;">%</span>
<div class="b" style="left:98.2px;top:518px;width:223.4px;height:63.6px;background:#f4f5f5;border-radius:4px;"></div>
<span id="t18" class="t" style="top:537.48px;font-size:24px;color:#24292e;left:113.77px;letter-spacing:0.882px;-webkit-text-stroke:0.53px #24292e;">File</span>
<div class="b" style="left:330.3px;top:518px;width:511.3px;height:63.6px;background:#ffffff;border:2px solid #b6b8bb;border-radius:4px;"></div>
<span id="t19" class="t" style="top:536.00px;font-size:28px;color:#24292e;left:347.78px;letter-spacing:0.965px;-webkit-text-stroke:0.35px #24292e;">population_by_state.csv</span>
<svg class="i" style="left:791.90px;top:534.50px;color:#3a3f45;--sw:2" width="32" height="32" viewBox="0 0 24 24"><path d="M17,9.17a1,1,0,0,0-1.41,0L12,12.71,8.46,9.17a1,1,0,0,0-1.41,0,1,1,0,0,0,0,1.42l4.24,4.24a1,1,0,0,0,1.42,0L17,10.59A1,1,0,0,0,17,9.17Z"/></svg>
<div class="b" style="left:50.2px;top:622.3px;width:229px;height:63px;background:#eeeeef;border:2px solid #d1d2d4;border-radius:4px;"></div>
<svg class="i" style="left:67.60px;top:635.80px;color:#24292e;--sw:2" width="36" height="36" viewBox="0 0 24 24"><path d="M19,11H13V5a1,1,0,0,0-2,0v6H5a1,1,0,0,0,0,2h6v6a1,1,0,0,0,2,0V13h6a1,1,0,0,0,0-2Z"/></svg>
<span id="t20" class="t" style="top:640.00px;font-size:28px;color:#24292e;left:120.92px;letter-spacing:1.440px;-webkit-text-stroke:0.84px #24292e;">Add query</span>
<div class="b" style="left:296.0px;top:622.3px;width:273.4px;height:63px;background:#eeeeef;border:2px solid #d1d2d4;border-radius:4px;"></div>
<svg class="i" style="left:313.70px;top:635.80px;color:#24292e;--sw:2.0" width="36" height="36" viewBox="0 0 24 24"><path d="M12,2A10,10,0,0,0,5.12,4.77V3a1,1,0,0,0-2,0V7.5a1,1,0,0,0,1,1H8.62a1,1,0,0,0,0-2H6.22A8,8,0,1,1,4,12a1,1,0,0,0-2,0A10,10,0,1,0,12,2Zm0,6a1,1,0,0,0-1,1v3a1,1,0,0,0,1,1h2a1,1,0,0,0,0-2H13V9A1,1,0,0,0,12,8Z"/></svg>
<span id="t21" class="t" style="top:640.00px;font-size:28px;color:#24292e;left:366.12px;letter-spacing:1.472px;-webkit-text-stroke:0.84px #24292e;">Query history</span>
<div class="b" style="left:586.2px;top:622.3px;width:307.4px;height:63px;background:#eeeeef;border:2px solid #d1d2d4;border-radius:4px;"></div>
<svg class="i" style="left:603.40px;top:635.80px;color:#24292e;--sw:2" width="36" height="36" viewBox="0 0 24 24"><path d="M12,2A10,10,0,1,0,22,12,10.01114,10.01114,0,0,0,12,2Zm0,18a8,8,0,1,1,8-8A8.00917,8.00917,0,0,1,12,20Zm0-8.5a1,1,0,0,0-1,1v3a1,1,0,0,0,2,0v-3A1,1,0,0,0,12,11.5Zm0-4a1.25,1.25,0,1,0,1.25,1.25A1.25,1.25,0,0,0,12,7.5Z"/></svg>
<span id="t22" class="t" style="top:640.00px;font-size:28px;color:#24292e;left:655.82px;letter-spacing:1.510px;-webkit-text-stroke:0.84px #24292e;">Query inspector</span>
<div class="b" style="left:32.4px;top:747px;width:1439.4px;height:385.5px;background:#ffffff;border:2px solid #e3e4e6;border-radius:4px;"></div>
<span id="t23" class="t" style="top:766.30px;font-size:28px;color:#24292e;left:51.32px;letter-spacing:1.207px;-webkit-text-stroke:0.84px #24292e;">Table - population_by_state.csv</span>
<span id="t24" class="t" style="top:842.20px;font-size:28px;color:#24292e;left:61.82px;letter-spacing:1.638px;-webkit-text-stroke:0.84px #24292e;">State</span>
<span id="t25" class="t" style="top:842.20px;font-size:28px;color:#24292e;right:2332.47px;letter-spacing:2.781px;-webkit-text-stroke:0.84px #24292e;">2020</span>
<span id="t26" class="t" style="top:842.20px;font-size:28px;color:#24292e;right:1980.87px;letter-spacing:2.981px;-webkit-text-stroke:0.84px #24292e;">2000</span>
<span id="t27" class="t" style="top:842.20px;font-size:28px;color:#24292e;right:1631.33px;letter-spacing:1.814px;-webkit-text-stroke:0.84px #24292e;">1980</span>
<div class="b" style="left:50px;top:884.2px;width:1403.7px;height:2px;background:#e1e2e4;"></div>
<div class="b" style="left:50px;top:955.8px;width:1403.7px;height:2px;background:#e1e2e4;"></div>
<div class="b" style="left:50px;top:1028px;width:1403.7px;height:2px;background:#e1e2e4;"></div>
<div class="b" style="left:399px;top:885px;width:2px;height:215px;background:#e1e2e4;"></div>
<div class="b" style="left:750px;top:885px;width:2px;height:215px;background:#e1e2e4;"></div>
<div class="b" style="left:1101px;top:885px;width:2px;height:215px;background:#e1e2e4;"></div>
<span id="t28" class="t" style="top:907.80px;font-size:28px;color:#2f65db;left:61.82px;letter-spacing:1.140px;-webkit-text-stroke:0.84px #2f65db;">California</span>
<span id="t29" class="t" style="top:907.80px;font-size:28px;color:#24292e;right:2327.00px;letter-spacing:2.006px;-webkit-text-stroke:0.35px #24292e;">39368078</span>
<span id="t30" class="t" style="top:907.80px;font-size:28px;color:#24292e;right:1976.28px;letter-spacing:1.721px;-webkit-text-stroke:0.35px #24292e;">33987977</span>
<span id="t31" class="t" style="top:907.80px;font-size:28px;color:#24292e;right:1622.33px;letter-spacing:2.278px;-webkit-text-stroke:0.35px #24292e;">23800800</span>
<span id="t32" class="t" style="top:980.00px;font-size:28px;color:#2f65db;left:62.82px;letter-spacing:1.429px;-webkit-text-stroke:0.84px #2f65db;">Texas</span>
<span id="t33" class="t" style="top:980.00px;font-size:28px;color:#24292e;right:2327.08px;letter-spacing:1.921px;-webkit-text-stroke:0.35px #24292e;">29360759</span>
<span id="t34" class="t" style="top:980.00px;font-size:28px;color:#24292e;right:1975.51px;letter-spacing:2.492px;-webkit-text-stroke:0.35px #24292e;">20944499</span>
<span id="t35" class="t" style="top:980.00px;font-size:28px;color:#24292e;right:1622.61px;letter-spacing:1.992px;-webkit-text-stroke:0.35px #24292e;">14338208</span>
<span id="t36" class="t" style="top:1052.20px;font-size:28px;color:#2f65db;left:60.82px;letter-spacing:1.191px;-webkit-text-stroke:0.84px #2f65db;">Florida</span>
<span id="t37" class="t" style="top:1052.20px;font-size:28px;color:#24292e;right:2328.12px;letter-spacing:0.878px;-webkit-text-stroke:0.35px #24292e;">21733312</span>
<span id="t38" class="t" style="top:1052.20px;font-size:28px;color:#24292e;right:1977.01px;letter-spacing:0.992px;-webkit-text-stroke:0.35px #24292e;">16047515</span>
<span id="t39" class="t" style="top:1052.20px;font-size:28px;color:#24292e;right:1622.27px;letter-spacing:2.336px;-webkit-text-stroke:0.35px #24292e;">9839835</span>
<div class="b" style="left:1515.7px;top:675px;width:8px;height:400px;background:#d9dadc;border-radius:4px;"></div>
<div class="b" style="left:4px;top:1566px;width:741px;height:14px;background:#dbdcde;border-radius:7px;"></div>
<div class="b" style="left:1568px;top:276.4px;width:1471.5px;height:435.4px;background:#ffffff;border:2px solid #e3e4e6;border-radius:4px;"></div>
<div class="b" style="left:1585.7px;top:294px;width:1436.3px;height:64px;background:#f4f5f5;border-radius:4px;"></div>
<svg class="i" style="left:1602.00px;top:310.00px;color:#6e7277;--sw:2" width="32" height="32" viewBox="0 0 24 24"><path d="M17,9.17a1,1,0,0,0-1.41,0L12,12.71,8.46,9.17a1,1,0,0,0-1.41,0,1,1,0,0,0,0,1.42l4.24,4.24a1,1,0,0,0,1.42,0L17,10.59A1,1,0,0,0,17,9.17Z"/></svg>
<span id="t40" class="t" style="top:312.80px;font-size:28px;color:#2f65db;left:1668.60px;-webkit-text-stroke:1.2px #2f65db;">A</span>
<span id="t41" class="t" style="top:314.18px;font-size:24px;color:#54585e;left:1770.30px;letter-spacing:1.171px;font-style:italic;">(TestData)</span>
<svg class="i" style="left:2793.60px;top:310.00px;color:#565a60;--sw:2.0" width="32" height="32" viewBox="0 0 24 24"><g class="s"><path d="M9 6.5V4.8A1.8 1.8 0 0 1 10.800 3H15l5 5v7.2A1.8 1.8 0 0 1 18.200 17H10.800A1.8 1.8 0 0 1 9 15.200Z"/><path d="M15 3.200V8h4.800"/><path d="M9 7H6.800A1.800 1.800 0 0 0 5 8.800V19.200A1.800 1.800 0 0 0 6.800 21H13.200A1.800 1.800 0 0 0 15 19.200V17"/></g></svg>
<svg class="i" style="left:2850.00px;top:310.00px;color:#565a60;--sw:2.0" width="32" height="32" viewBox="0 0 24 24"><path d="M21.92,11.6C19.9,6.91,16.1,4,12,4S4.1,6.91,2.08,11.6a1,1,0,0,0,0,.8C4.1,17.09,7.9,20,12,20s7.9-2.91,9.92-7.6A1,1,0,0,0,21.92,11.6ZM12,18c-3.17,0-6.17-2.29-7.9-6C5.83,8.29,8.83,6,12,6s6.17,2.29,7.9,6C18.17,15.71,15.17,18,12,18ZM12,8a4,4,0,1,0,4,4A4,4,0,0,0,12,8Zm0,6a2,2,0,1,1,2-2A2,2,0,0,1,12,14Z"/></svg>
<svg class="i" style="left:2905.70px;top:310.00px;color:#565a60;--sw:2.0" width="32" height="32" viewBox="0 0 24 24"><g class="s"><path d="M4 7h16"/><path d="M9 7V4.500A1.500 1.500 0 0 1 10.500 3h3A1.500 1.500 0 0 1 15 4.500V7"/><path d="M6 7v12.200A1.800 1.800 0 0 0 7.800 21h8.400A1.800 1.800 0 0 0 18 19.200V7"/><path d="M10 11v6M14 11v6"/></g></svg>
<svg class="i" style="left:2972.00px;top:310.00px;color:#8f9296;--sw:2" width="32" height="32" viewBox="0 0 24 24"><g><circle cx="8.300" cy="4.300" r="2.250"/><circle cx="15.700" cy="4.300" r="2.250"/><circle cx="8.300" cy="12" r="2.250"/><circle cx="15.700" cy="12" r="2.250"/><circle cx="8.300" cy="19.700" r="2.250"/><circle cx="15.700" cy="19.700" r="2.250"/></g></svg>
<div class="b" style="left:1634px;top:366px;width:223.6px;height:63.6px;background:#f4f5f5;border-radius:4px;"></div>
<span id="t42" class="t" style="top:385.48px;font-size:24px;color:#24292e;left:1649.57px;letter-spacing:1.128px;-webkit-text-stroke:0.53px #24292e;">Scenario</span>
<div class="b" style="left:1866.3px;top:366px;width:512px;height:63.6px;background:#ffffff;border:2px solid #b6b8bb;border-radius:4px;"></div>
<span id="t43" class="t" style="top:384.00px;font-size:28px;color:#24292e;left:1883.77px;letter-spacing:0.985px;-webkit-text-stroke:0.35px #24292e;">CSV Metric Values</span>
<svg class="i" style="left:2328.60px;top:382.50px;color:#3a3f45;--sw:2" width="32" height="32" viewBox="0 0 24 24"><path d="M17,9.17a1,1,0,0,0-1.41,0L12,12.71,8.46,9.17a1,1,0,0,0-1.41,0,1,1,0,0,0,0,1.42l4.24,4.24a1,1,0,0,0,1.42,0L17,10.59A1,1,0,0,0,17,9.17Z"/></svg>
<div class="b" style="left:1634px;top:446.3px;width:169.5px;height:63.6px;background:#f4f5f5;border-radius:4px;"></div>
<span id="t44" class="t" style="top:465.78px;font-size:24px;color:#24292e;left:1649.57px;letter-spacing:1.263px;-webkit-text-stroke:0.53px #24292e;">String Input</span>
<div class="b" style="left:1812.2px;top:446.3px;width:512.2px;height:63.6px;background:#ffffff;border:2px solid #b6b8bb;border-radius:4px;"></div>
<span id="t45" class="t" style="top:464.30px;font-size:28px;color:#24292e;left:1828.67px;letter-spacing:1.545px;-webkit-text-stroke:0.35px #24292e;">14338208,20944499,29360759</span>
<div class="b" style="left:1634px;top:526.3px;width:223.6px;height:63.6px;background:#f4f5f5;border-radius:4px;"></div>
<span id="t46" class="t" style="top:545.78px;font-size:24px;color:#24292e;left:1650.57px;letter-spacing:0.613px;-webkit-text-stroke:0.53px #24292e;">Alias</span>
<div class="b" style="left:1866.3px;top:526.3px;width:512px;height:63.6px;background:#ffffff;border:2px solid #b6b8bb;border-radius:4px;"></div>
<span id="t47" class="t" style="top:544.30px;font-size:28px;color:#24292e;left:1884.77px;letter-spacing:0.576px;-webkit-text-stroke:0.35px #24292e;">Texas</span>
<div class="b" style="left:1585.7px;top:630.4px;width:229px;height:63px;background:#eeeeef;border:2px solid #d1d2d4;border-radius:4px;"></div>
<svg class="i" style="left:1603.10px;top:643.90px;color:#24292e;--sw:2" width="36" height="36" viewBox="0 0 24 24"><path d="M19,11H13V5a1,1,0,0,0-2,0v6H5a1,1,0,0,0,0,2h6v6a1,1,0,0,0,2,0V13h6a1,1,0,0,0,0-2Z"/></svg>
<span id="t48" class="t" style="top:648.10px;font-size:28px;color:#24292e;left:1656.42px;letter-spacing:1.440px;-webkit-text-stroke:0.84px #24292e;">Add query</span>
<div class="b" style="left:1831.5px;top:630.4px;width:273.4px;height:63px;background:#eeeeef;border:2px solid #d1d2d4;border-radius:4px;"></div>
<svg class="i" style="left:1849.20px;top:643.90px;color:#24292e;--sw:2.0" width="36" height="36" viewBox="0 0 24 24"><path d="M12,2A10,10,0,0,0,5.12,4.77V3a1,1,0,0,0-2,0V7.5a1,1,0,0,0,1,1H8.62a1,1,0,0,0,0-2H6.22A8,8,0,1,1,4,12a1,1,0,0,0-2,0A10,10,0,1,0,12,2Zm0,6a1,1,0,0,0-1,1v3a1,1,0,0,0,1,1h2a1,1,0,0,0,0-2H13V9A1,1,0,0,0,12,8Z"/></svg>
<span id="t49" class="t" style="top:648.10px;font-size:28px;color:#24292e;left:1901.62px;letter-spacing:1.472px;-webkit-text-stroke:0.84px #24292e;">Query history</span>
<div class="b" style="left:2121.7px;top:630.4px;width:307.4px;height:63px;background:#eeeeef;border:2px solid #d1d2d4;border-radius:4px;"></div>
<svg class="i" style="left:2138.90px;top:643.90px;color:#24292e;--sw:2" width="36" height="36" viewBox="0 0 24 24"><path d="M12,2A10,10,0,1,0,22,12,10.01114,10.01114,0,0,0,12,2Zm0,18a8,8,0,1,1,8-8A8.00917,8.00917,0,0,1,12,20Zm0-8.5a1,1,0,0,0-1,1v3a1,1,0,0,0,2,0v-3A1,1,0,0,0,12,11.5Zm0-4a1.25,1.25,0,1,0,1.25,1.25A1.25,1.25,0,0,0,12,7.5Z"/></svg>
<span id="t50" class="t" style="top:648.10px;font-size:28px;color:#24292e;left:2191.32px;letter-spacing:1.510px;-webkit-text-stroke:0.84px #24292e;">Query inspector</span>
<div class="b" style="left:1568px;top:754.4px;width:1471.5px;height:799.6px;background:#ffffff;border:2px solid #e3e4e6;border-radius:4px;"></div>
<div class="b" style="left:1568px;top:1570px;width:1471.5px;height:40px;background:#ffffff;border:2px solid #e3e4e6;border-radius:4px;"></div>
<span id="t51" class="t" style="top:773.80px;font-size:28px;color:#24292e;left:1586.32px;letter-spacing:1.228px;-webkit-text-stroke:0.84px #24292e;">Graph</span>
<div class="b" style="left:2356.4px;top:764.5px;width:665.3px;height:47px;background:#ffffff;border:2px solid #b6b8bb;border-radius:4px;"></div>
<div class="b" style="left:2362px;top:770px;width:94.6px;height:35.6px;background:#eeeeef;border-radius:3px;"></div>
<span id="t52" class="t" style="top:775.98px;font-size:24px;color:#24292e;left:2377.96px;letter-spacing:0.974px;-webkit-text-stroke:0.53px #24292e;">Lines</span>
<span id="t53" class="t" style="top:775.98px;font-size:24px;color:#5a5e64;left:2472.85px;letter-spacing:0.351px;-webkit-text-stroke:0.3px #5a5e64;">Bars</span>
<span id="t54" class="t" style="top:775.98px;font-size:24px;color:#5a5e64;left:2556.35px;letter-spacing:0.859px;-webkit-text-stroke:0.3px #5a5e64;">Points</span>
<span id="t55" class="t" style="top:775.98px;font-size:24px;color:#5a5e64;left:2660.45px;letter-spacing:0.921px;-webkit-text-stroke:0.3px #5a5e64;">Stacked lines</span>
<span id="t56" class="t" style="top:775.98px;font-size:24px;color:#5a5e64;left:2847.35px;letter-spacing:1.057px;-webkit-text-stroke:0.3px #5a5e64;">Stacked bars</span>
<svg class="i" style="left:0;top:0" width="3066" height="1576" viewBox="0 0 3066 1576"><g stroke="#e3e4e6" stroke-width="1"><line x1="1674.7" x2="3006.4" y1="883.5" y2="883.5"/><line x1="1674.7" x2="3006.4" y1="945.5" y2="945.5"/><line x1="1674.7" x2="3006.4" y1="1008.5" y2="1008.5"/><line x1="1674.7" x2="3006.4" y1="1071.5" y2="1071.5"/><line x1="1674.7" x2="3006.4" y1="1133.5" y2="1133.5"/><line x1="1674.7" x2="3006.4" y1="1196.5" y2="1196.5"/><line x1="1674.7" x2="3006.4" y1="1258.5" y2="1258.5"/><line x1="1674.7" x2="3006.4" y1="1321.5" y2="1321.5"/><line x1="1674.7" x2="3006.4" y1="1383.5" y2="1383.5"/><line x1="1674.7" x2="3006.4" y1="1446.5" y2="1446.5"/></g><g stroke="#e7e8ea" stroke-width="1"><line x1="1717.5" x2="1717.5" y1="852" y2="1454.3"/><line x1="1828.5" x2="1828.5" y1="852" y2="1454.3"/><line x1="1939.5" x2="1939.5" y1="852" y2="1454.3"/><line x1="2050.5" x2="2050.5" y1="852" y2="1454.3"/><line x1="2161.5" x2="2161.5" y1="852" y2="1454.3"/><line x1="2272.5" x2="2272.5" y1="852" y2="1454.3"/><line x1="2383.5" x2="2383.5" y1="852" y2="1454.3"/><line x1="2494.5" x2="2494.5" y1="852" y2="1454.3"/><line x1="2605.5" x2="2605.5" y1="852" y2="1454.3"/><line x1="2716.5" x2="2716.5" y1="852" y2="1454.3"/><line x1="2827.5" x2="2827.5" y1="852" y2="1454.3"/><line x1="2938.5" x2="2938.5" y1="852" y2="1454.3"/></g><polyline fill="none" stroke="#62a150" stroke-width="2.2" points="1673.6,1372.8 2339.7,1165.7 3005.6,902.4"/><circle cx="1673.6" cy="1372.8" r="5" fill="#62a150"/><circle cx="2339.7" cy="1165.7" r="5" fill="#62a150"/><circle cx="3005.6" cy="902.4" r="5" fill="#62a150"/><rect x="1594" y="1512.3" width="28.300" height="9" rx="4.500" fill="#62a150"/><polygon points="0,1561 0,1576 3.500,1576" fill="#050505"/></svg>
<span id="t57" class="t" style="top:869.68px;font-size:24px;color:#24292e;right:1401.04px;letter-spacing:1.183px;-webkit-text-stroke:0.3px #24292e;">30 Mil</span>
<span id="t58" class="t" style="top:932.22px;font-size:24px;color:#24292e;right:1400.84px;letter-spacing:1.383px;-webkit-text-stroke:0.3px #24292e;">28 Mil</span>
<span id="t59" class="t" style="top:994.76px;font-size:24px;color:#24292e;right:1400.84px;letter-spacing:1.383px;-webkit-text-stroke:0.3px #24292e;">26 Mil</span>
<span id="t60" class="t" style="top:1057.30px;font-size:24px;color:#24292e;right:1400.84px;letter-spacing:1.383px;-webkit-text-stroke:0.3px #24292e;">24 Mil</span>
<span id="t61" class="t" style="top:1119.84px;font-size:24px;color:#24292e;right:1400.84px;letter-spacing:1.383px;-webkit-text-stroke:0.3px #24292e;">22 Mil</span>
<span id="t62" class="t" style="top:1182.38px;font-size:24px;color:#24292e;right:1400.84px;letter-spacing:1.383px;-webkit-text-stroke:0.3px #24292e;">20 Mil</span>
<span id="t63" class="t" style="top:1244.92px;font-size:24px;color:#24292e;right:1401.38px;letter-spacing:0.843px;-webkit-text-stroke:0.3px #24292e;">18 Mil</span>
<span id="t64" class="t" style="top:1307.46px;font-size:24px;color:#24292e;right:1401.38px;letter-spacing:0.843px;-webkit-text-stroke:0.3px #24292e;">16 Mil</span>
<span id="t65" class="t" style="top:1370.00px;font-size:24px;color:#24292e;right:1401.38px;letter-spacing:0.843px;-webkit-text-stroke:0.3px #24292e;">14 Mil</span>
<span id="t66" class="t" style="top:1432.54px;font-size:24px;color:#24292e;right:1401.38px;letter-spacing:0.843px;-webkit-text-stroke:0.3px #24292e;">12 Mil</span>
<span id="t67" class="t" style="top:1462.68px;font-size:24px;color:#24292e;left:1317.77px;width:800px;text-align:center;letter-spacing:0.797px;-webkit-text-stroke:0.3px #24292e;">15:30</span>
<span id="t68" class="t" style="top:1462.68px;font-size:24px;color:#24292e;left:1428.74px;width:800px;text-align:center;letter-spacing:0.797px;-webkit-text-stroke:0.3px #24292e;">16:00</span>
<span id="t69" class="t" style="top:1462.68px;font-size:24px;color:#24292e;left:1539.71px;width:800px;text-align:center;letter-spacing:0.797px;-webkit-text-stroke:0.3px #24292e;">16:30</span>
<span id="t70" class="t" style="top:1462.68px;font-size:24px;color:#24292e;left:1650.68px;width:800px;text-align:center;letter-spacing:0.797px;-webkit-text-stroke:0.3px #24292e;">17:00</span>
<span id="t71" class="t" style="top:1462.68px;font-size:24px;color:#24292e;left:1761.65px;width:800px;text-align:center;letter-spacing:0.797px;-webkit-text-stroke:0.3px #24292e;">17:30</span>
<span id="t72" class="t" style="top:1462.68px;font-size:24px;color:#24292e;left:1872.62px;width:800px;text-align:center;letter-spacing:0.797px;-webkit-text-stroke:0.3px #24292e;">18:00</span>
<span id="t73" class="t" style="top:1462.68px;font-size:24px;color:#24292e;left:1983.59px;width:800px;text-align:center;letter-spacing:0.797px;-webkit-text-stroke:0.3px #24292e;">18:30</span>
<span id="t74" class="t" style="top:1462.68px;font-size:24px;color:#24292e;left:2094.56px;width:800px;text-align:center;letter-spacing:0.797px;-webkit-text-stroke:0.3px #24292e;">19:00</span>
<span id="t75" class="t" style="top:1462.68px;font-size:24px;color:#24292e;left:2205.53px;width:800px;text-align:center;letter-spacing:0.797px;-webkit-text-stroke:0.3px #24292e;">19:30</span>
<span id="t76" class="t" style="top:1462.68px;font-size:24px;color:#24292e;left:2316.93px;width:800px;text-align:center;letter-spacing:1.647px;-webkit-text-stroke:0.3px #24292e;">20:00</span>
<span id="t77" class="t" style="top:1462.68px;font-size:24px;color:#24292e;left:2427.90px;width:800px;text-align:center;letter-spacing:1.647px;-webkit-text-stroke:0.3px #24292e;">20:30</span>
<span id="t78" class="t" style="top:1462.68px;font-size:24px;color:#24292e;left:2538.44px;width:800px;text-align:center;letter-spacing:0.797px;-webkit-text-stroke:0.3px #24292e;">21:00</span>
<span id="t79" class="t" style="top:1504.68px;font-size:24px;color:#24292e;left:1639.15px;letter-spacing:0.626px;-webkit-text-stroke:0.3px #24292e;">Texas</span>
<div class="b" style="left:820px;top:1586px;width:1430px;height:60px;box-shadow:0 0 90px 0 rgba(0,0,0,.24)"></div>
</body></html>
